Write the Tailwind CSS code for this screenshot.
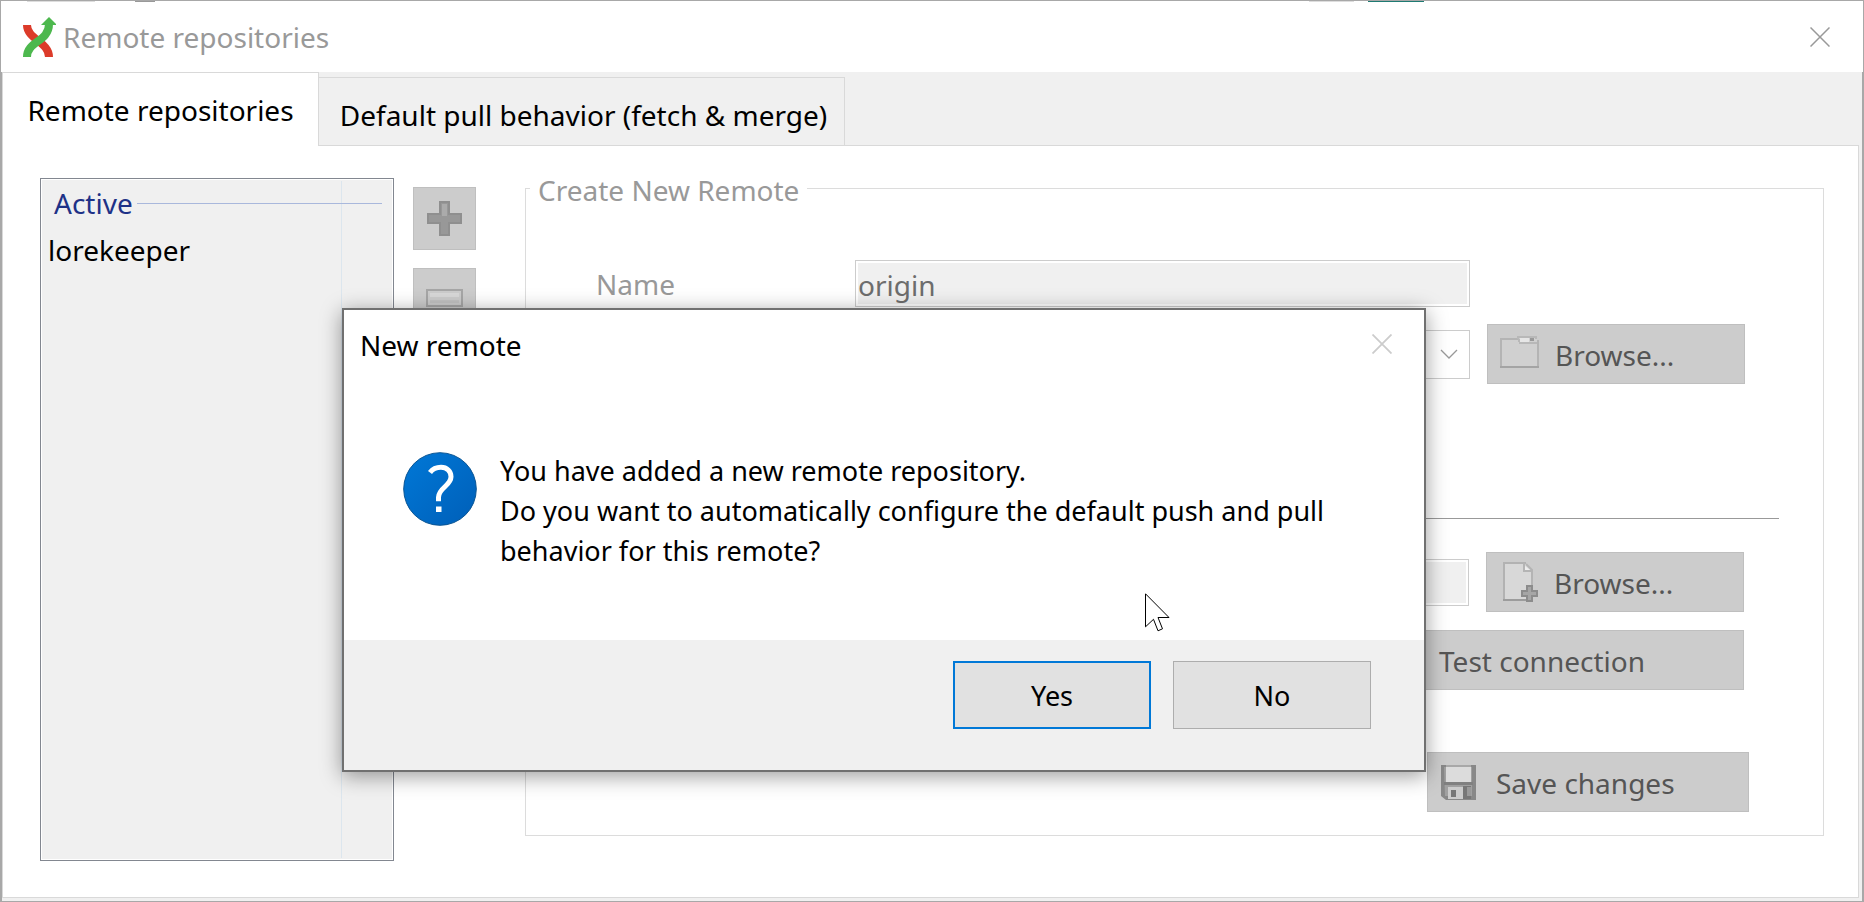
<!DOCTYPE html>
<html lang="en">
<head>
<meta charset="utf-8">
<title>Remote repositories</title>
<script src="https://cdn.jsdelivr.net/npm/@tailwindcss/browser@4"></script>
</head>
<body class="font-['Noto_Sans','Open_Sans',sans-serif] text-[28px] leading-10 text-black">
<div class="relative flex min-h-screen flex-col border border-[#a8a8a8] bg-white">

  <!-- Title bar -->
  <header class="flex h-[71px] items-center pr-[33px] pl-[21px]">
    <svg class="h-[40px] w-[34px]" viewBox="0 0 34 40" fill="none" aria-hidden="true">
      <path d="M5 8C5 22 27 25 27 40" stroke="#dc3b2a" stroke-width="8"/>
      <path d="M5 40C5 24 27 25 27 7" stroke="#4db84e" stroke-width="8"/>
      <path d="M19 8 27 0l8 8z" fill="#4db84e"/>
    </svg>
    <h1 class="ml-[7px] text-[#999]">Remote repositories</h1>
    <button type="button" aria-label="Close window" class="ml-auto">
      <svg class="size-5" viewBox="0 0 20 20" stroke="#999" stroke-width="1.5" aria-hidden="true"><path d="M.5.5l19 19M19.5.5l-19 19"/></svg>
    </button>
  </header>

  <div class="flex flex-1 flex-col border-x border-[#a8a8a8] bg-[#f0f0f0] pr-[3px] pb-[3px]">
    <!-- Tabs -->
    <div role="tablist" class="flex items-end">
      <button type="button" role="tab" aria-selected="true" class="relative z-10 -mb-px h-[74px] w-[317px] border border-b-0 border-[#d9d9d9] bg-white whitespace-nowrap">Remote repositories</button>
      <button type="button" role="tab" aria-selected="false" class="h-[68px] w-[526px] border border-b-0 border-l-0 border-[#d9d9d9] pt-1.5 pl-1 whitespace-nowrap">Default pull behavior (fetch &amp; merge)</button>
    </div>

    <!-- Tab panel -->
    <main class="flex flex-1 border border-[#d9d9d9] bg-white pt-5 pr-[34px] pb-9 pl-[37px]">
      <section class="relative mt-3 w-[354px] border border-[#828790] bg-[#f0f0f0] pt-1 inset-ring inset-ring-white">
        <div class="absolute inset-y-0.5 right-[51px] w-px bg-[#dce6ee]"></div>
        <div class="relative flex items-center pr-[11px] pl-[13px]">
          <h2 class="text-[#1e3287]">Active</h2>
          <div class="ml-1 h-px flex-1 bg-[#a9b8dc]"></div>
        </div>
        <ul><li class="relative mt-[7px] pl-[7px]">lorekeeper</li></ul>
      </section>

      <div class="mt-[21px] ml-[19px] flex w-[63px] flex-col gap-[18px]">
        <button type="button" disabled aria-label="Add remote" class="flex h-[63px] items-center justify-center border border-[#bfbfbf] bg-[#ccc]">
          <svg class="size-[35px]" viewBox="0 0 35 35" aria-hidden="true">
            <path d="M13 1h9v12h12v9H22v12h-9V22H1v-9h12z" fill="#989898" stroke="#8f8f8f" stroke-width="2"/>
            <path d="M15 3h5v12H3v5V15h12z" fill="#ababab"/>
          </svg>
        </button>
        <button type="button" disabled aria-label="Remove remote" class="flex h-[63px] items-center justify-center border border-[#bfbfbf] bg-[#ccc] pb-1">
          <svg class="h-[18px] w-[37px]" viewBox="0 0 37 18" aria-hidden="true">
            <rect x="1" y="1" width="35" height="16" fill="#ccc" stroke="#a6a6a6" stroke-width="2"/>
            <path d="M4 4h29v4H4z" fill="#d8d8d8"/><path d="M4 11h29v3H4z" fill="#c2c2c2"/>
          </svg>
        </button>
      </div>

      <fieldset class="mb-[25px] ml-[49px] min-w-0 flex-1 border border-[#dcdcdc] pb-[23px] text-[#555]">
        <legend class="ml-1 px-2 pt-1 text-[#999]">Create New Remote</legend>
        <div class="flex flex-col pt-[50px] pr-[78px] pl-[70px]">
          <div class="flex items-center">
            <label for="name" class="w-[259px] text-[#999]">Name</label>
            <input id="name" type="text" value="origin" disabled class="h-[47px] min-w-0 flex-1 border border-[#ccc] bg-[#f0f0f0] px-0.5 pt-0.5 text-[#6d6d6d] inset-ring-2 inset-ring-white">
            <div class="w-[275px]"></div>
          </div>

          <div class="mt-[17px] flex items-center">
            <div class="relative ml-[259px] h-[49px] min-w-0 flex-1">
              <select aria-label="Url" disabled class="size-full appearance-none border border-[#ccc] bg-white"><option></option></select>
              <svg class="pointer-events-none absolute top-[19px] right-3 h-[10px] w-[18px]" viewBox="0 0 18 10" fill="none" stroke="#999" stroke-width="1.3" aria-hidden="true"><path d="M1 1l8 8 8-8"/></svg>
            </div>
            <button type="button" disabled class="ml-[17px] flex h-[60px] w-[258px] items-center border border-[#bfbfbf] bg-[#ccc] pl-3">
              <svg class="mb-1 h-[32px] w-[39px]" viewBox="0 0 39 32" aria-hidden="true">
                <path d="M1 3h18l2-2h16v30H1z" fill="#d0d0d0"/>
                <path d="M1 31V3h17M38 4v27" fill="none" stroke="#b4b4b4" stroke-width="2"/>
                <path d="M18 3V1h18v2M19 7h18M19 3v3" fill="none" stroke="#b8b8b8" stroke-width="2"/>
                <path d="M20 2h9v4h-9z" fill="#e6e6e6"/><path d="M30 2h4v3h-4z" fill="#999"/>
                <path d="M0 31h39" stroke="#a4a4a4" stroke-width="2"/>
              </svg>
              <span class="ml-4 pt-0.5">Browse...</span>
            </button>
          </div>

          <hr class="mt-[134px] -mr-[34px] border-[#999]">

          <div class="mt-[33px] mr-px flex items-center">
            <input type="text" aria-label="Private key file" disabled class="ml-[259px] h-[47px] min-w-0 flex-1 border border-[#ccc] bg-[#f0f0f0] inset-ring-2 inset-ring-white">
            <button type="button" disabled class="ml-[17px] flex h-[60px] w-[258px] items-center border border-[#bfbfbf] bg-[#ccc] pl-4">
              <svg class="h-[40px] w-[35px]" viewBox="0 0 35 40" aria-hidden="true">
                <path d="M1 1h22l6 6v31H1z" fill="#d8d8d8"/>
                <path d="M1 39V1h22" fill="none" stroke="#b2b2b2" stroke-width="2"/>
                <path d="M21 1v8h9M23 2l6 6v16" fill="none" stroke="#b4b4b4" stroke-width="2"/>
                <path d="M22 4l5 4h-5z" fill="#eee"/>
                <path d="M0 38h26" stroke="#9c9c9c" stroke-width="2"/>
                <path d="M24 24h5v5h5v5h-5v5h-5v-5h-5v-5h5z" fill="#a6a6a6" stroke="#8c8c8c" stroke-width="2"/>
              </svg>
              <span class="ml-4 pt-0.5">Browse...</span>
            </button>
          </div>

          <button type="button" disabled class="mt-[18px] mr-px flex h-[60px] w-[322px] items-center self-end border border-[#bfbfbf] bg-[#ccc] pt-0.5 pl-4">Test connection</button>

          <button type="button" disabled class="mt-[62px] -mr-1 flex h-[60px] w-[322px] items-center self-end border border-[#bfbfbf] bg-[#ccc] pl-[13px]">
            <svg class="size-[35px]" viewBox="0 0 35 35" aria-hidden="true">
              <path d="M0 0h35v35H5l-5-4z" fill="#888"/>
              <path d="M3 2h28v29H4z" fill="#a0a0a0"/>
              <path d="M5 0h25v17H5z" fill="#dcdcdc"/><path d="M5 0h25v2H5z" fill="#a8a8a8"/>
              <path d="M3 17h29v3H3z" fill="#808080"/>
              <path d="M7 22h15v12H7z" fill="#ccc"/><path d="M10 25h5v7h-5z" fill="#777"/>
              <path d="M22 21h8v13h-8z" fill="#777"/><path d="M26 22h4v9h-4z" fill="#999"/>
            </svg>
            <span class="ml-5 pt-0.5">Save changes</span>
          </button>
        </div>
      </fieldset>
    </main>
  </div>

  <!-- Sliver of the window behind, showing above the title bar -->
  <div class="absolute inset-x-0 top-0 flex h-px overflow-hidden" aria-hidden="true">
    <i class="ml-[26px] h-px w-[68px] bg-[#ddd]"></i><i class="ml-10 h-px w-5 bg-[#999]"></i>
    <i class="ml-[1154px] h-px w-[45px] bg-[#ddd]"></i><i class="ml-[14px] h-px w-14 bg-[#1f7a72]"></i>
  </div>

  <!-- Confirmation dialog -->
  <div role="dialog" aria-modal="true" aria-labelledby="dialog-title" class="absolute top-[307px] left-[341px] z-20 w-[1084px] border-2 border-[#707070] bg-white shadow-[0_4px_20px_rgba(0,0,0,0.4)]">
    <div class="flex items-start justify-between pt-[15px] pr-8 pl-4">
      <h2 id="dialog-title">New remote</h2>
      <button type="button" aria-label="Close dialog" class="pt-[9px]">
        <svg class="size-5" viewBox="0 0 20 20" stroke="#ccc" stroke-width="1.8" aria-hidden="true"><path d="M.5.5l19 19M19.5.5l-19 19"/></svg>
      </button>
    </div>
    <div class="flex items-start pt-[86px] pb-[69px] pl-[59px]">
      <svg class="mt-px size-[74px] shrink-0" viewBox="0 0 74 74" aria-hidden="true">
        <defs><linearGradient id="ball" x1="0" y1="0" x2="1" y2="1"><stop offset="0" stop-color="#0078d7"/><stop offset="1" stop-color="#005fb8"/></linearGradient></defs>
        <circle cx="37" cy="37" r="36.300" fill="url(#ball)" stroke="#0a5594"/>
        <path d="M27 20.500C30 16.500 34 15.300 38 15.300c6 0 10 4 10 9.500 0 9-12.500 11-12.500 20.500v4" fill="none" stroke="#fff" stroke-width="5"/>
        <path d="M33 54.500h5.500v5.500H33z" fill="#fff"/>
      </svg>
      <p class="ml-[23px] text-[27px] leading-10">You have added a new remote repository.<br>Do you want to automatically configure the default push and pull<br>behavior for this remote?</p>
    </div>
    <div class="flex justify-end gap-[22px] bg-[#f0f0f0] pt-[21px] pr-[53px] pb-[41px]">
      <button type="button" class="h-[68px] w-[198px] border-2 border-[#0078d7] bg-[#e1e1e1] pt-0.5 text-[27px]">Yes</button>
      <button type="button" class="h-[68px] w-[198px] border border-[#adadad] bg-[#e1e1e1] pt-0.5 text-[27px]">No</button>
    </div>
  </div>

  <!-- Mouse pointer -->
  <svg class="absolute top-[592px] left-[1144px] z-30 h-[39px] w-[26px]" viewBox="0 0 26 39" fill="#fff" stroke="#000" aria-hidden="true"><path d="M.5.8v33l8-7.500 4.500 11.500 4.500-2-4.500-11.300h11z"/></svg>
</div>
</body>
</html>
